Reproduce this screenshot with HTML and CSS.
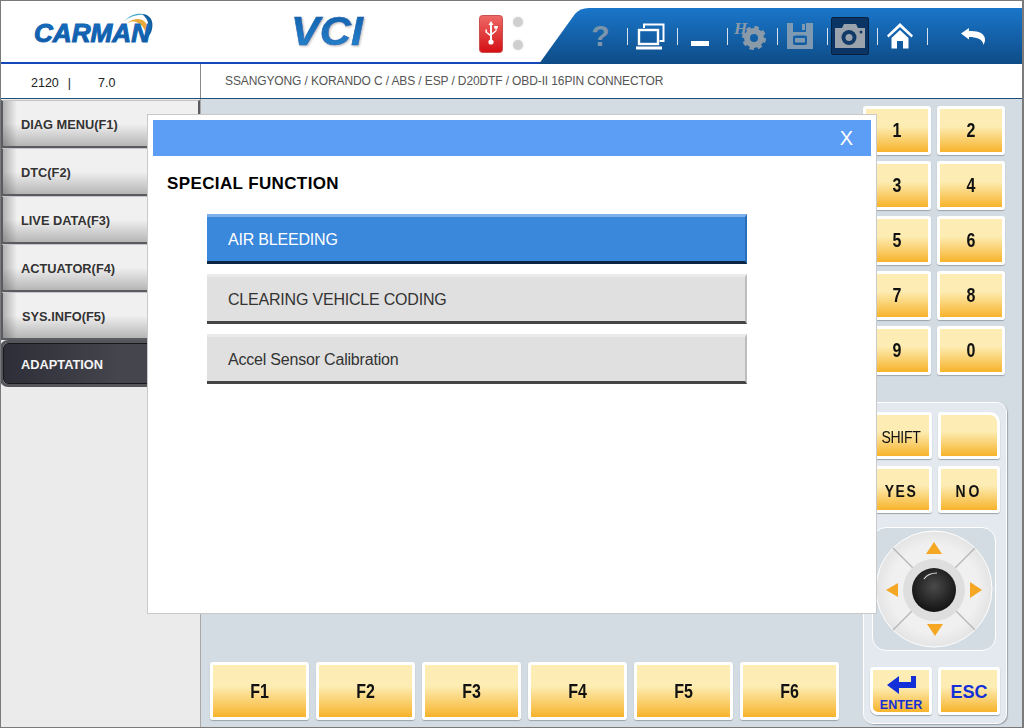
FILE: index.html
```html
<!DOCTYPE html>
<html lang="en">
<head>
<meta charset="utf-8">
<title>CARMAN VCI</title>
<link rel="stylesheet" href="styles.css">
</head>
<body>
<div class="app">
  <header class="top">
    <div class="logo-cell">
      <svg class="carman" width="130" height="34" viewBox="0 0 130 34">
        <defs>
          <linearGradient id="cg" x1="0" y1="0" x2="0" y2="1"><stop offset="0" stop-color="#1a72c4"/><stop offset="1" stop-color="#0d559f"/></linearGradient>
        </defs>
        <g transform="translate(-2 0)">
          <path d="M92 8 C99 1 108 -1 113 2 C106 1 99 3 92 8Z" fill="#3fa9c8"/>
          <path d="M95 10 C102 5 109 5 113 9 C116 13 116 18 114 22 C113 16 110 11 104 9 C101 8 98 9 95 10Z" fill="#e9a93a"/>
          <path d="M110 1 C118 1 122 8 120 16 C119 22 114 27 109 29 L113 22 C118 16 118 7 110 1Z" fill="#11609f"/>
        </g>
        <text x="0" y="29" class="carman-text" textLength="116" lengthAdjust="spacingAndGlyphs" fill="url(#cg)" stroke="#1264b2" stroke-width="1">CARMAN</text>
      </svg>
    </div>
    <div class="vci-cell">
      <svg width="84" height="40" viewBox="0 0 84 40">
        <defs>
          <linearGradient id="vg" x1="0" y1="0" x2="0" y2="1"><stop offset="0" stop-color="#0f5da8"/><stop offset="1" stop-color="#2a86d0"/></linearGradient>
          <filter id="vs" x="-10%" y="-10%" width="125%" height="125%"><feDropShadow dx="1" dy="1" stdDeviation="0.8" flood-color="#999" flood-opacity=".7"/></filter>
        </defs>
        <text x="0" y="31" class="vci-text" textLength="72" lengthAdjust="spacingAndGlyphs" fill="url(#vg)" stroke="#1668b5" stroke-width=".6" filter="url(#vs)">VCI</text>
      </svg>
    </div>
    <div class="usb-cell">
      <svg width="24" height="38" viewBox="0 0 24 38">
        <defs><linearGradient id="ug" x1="0" y1="0" x2="0" y2="1"><stop offset="0" stop-color="#ee6a66"/><stop offset="1" stop-color="#d40f14"/></linearGradient></defs>
        <rect x=".5" y=".5" width="23" height="37" rx="3" fill="url(#ug)" stroke="#c9504e"/>
        <path d="M12 6 L14.5 10 H13 V25 H11 V10 H9.5Z M11 21 L6.5 17.5 V14.5 H8 V17 L11 19Z M13 18 L16.5 15.5 V13.5 H15.2 V11 H18.8 V13.5 H17.6 V16 L13 20Z" fill="#fff"/>
        <circle cx="12" cy="27" r="2.6" fill="#fff"/>
      </svg>
    </div>
    <div class="leds"><span class="led"></span><span class="led"></span></div>
    <nav class="toolbar">
      <div class="tool"><span class="help">?</span></div><i class="sep"></i>
      <div class="tool">
        <svg width="29" height="27" viewBox="0 0 29 27" fill="none" stroke="#fff" stroke-width="2"><path d="M8 5 V1.500 H27.500 V18 H23.500"/><rect x="3" y="7" width="19" height="14" stroke-width="2.400"/><path d="M0 25 H26" stroke-width="3.200"/></svg>
      </div><i class="sep"></i>
      <div class="tool"><span class="minimize"></span></div><i class="sep"></i>
      <div class="tool">
        <svg class="gear" width="34" height="28" viewBox="0 0 34 28">
          <circle cx="21" cy="16" r="7" fill="none" stroke="#8a9aa8" stroke-width="6"/>
          <circle cx="21" cy="16" r="10.500" fill="none" stroke="#8a9aa8" stroke-width="3" stroke-dasharray="4.4 3.850"/>
          <text x="1" y="12" class="h-mark">H</text>
        </svg>
      </div><i class="sep"></i>
      <div class="tool">
        <svg width="26" height="26" viewBox="0 0 26 26"><path fill-rule="evenodd" fill="#7e99b2" d="M0 0 H6 V9 H19 V0 H21 L26 0 V26 H0Z M6 14 Q6 12.500 8 12.500 H18 Q20 12.500 20 14 V20 Q20 22 18 22 H8 Q6 22 6 20Z M8 15 V19.500 H18 V15Z"/><path fill="#7e99b2" d="M15 1 H18 V7 H15Z"/></svg>
      </div><i class="sep"></i>
      <div class="tool tool-active">
        <svg width="32" height="26" viewBox="0 0 32 26">
          <path fill="#9aa3ab" d="M1 5 H8 L10 1 H22 L24 5 H31 V25 H1Z"/>
          <circle cx="15" cy="14.500" r="7.500" fill="#123a68"/>
          <circle cx="15" cy="14.500" r="3.500" fill="#9aa3ab"/>
          <circle cx="27" cy="9" r="1.500" fill="#123a68"/>
        </svg>
      </div><i class="sep"></i>
      <div class="tool">
        <svg width="26" height="26" viewBox="0 0 26 26"><path fill="#fff" d="M13 0 L26 12.500 L24.500 14.500 L13 4 L1.500 14.500 L0 12.500Z M4.500 15 L13 7 L21.500 15 V25.500 H16 V18 H10 V25.500 H4.500Z"/></svg>
      </div><i class="sep"></i>
      <div class="tool tool-back">
        <svg width="25" height="17" viewBox="0 0 25 17"><path fill="#fff" d="M0 5.500 L8 0 V3 C17 2.500 25 5 24 13 L22.500 17 C22 11 15 9 8 9 V11.500Z"/></svg>
      </div>
    </nav>
  </header>

  <div class="info">
    <div class="info-ver"><span class="ver-a">2120&nbsp; |</span><span>7.0</span></div>
    <div class="info-path">SSANGYONG / KORANDO C / ABS / ESP / D20DTF / OBD-II 16PIN CONNECTOR</div>
  </div>

  <main class="main">
    <aside class="sidebar">
      <div class="side-btn">DIAG MENU(F1)</div>
      <div class="side-btn">DTC(F2)</div>
      <div class="side-btn">LIVE DATA(F3)</div>
      <div class="side-btn">ACTUATOR(F4)</div>
      <div class="side-btn side-indent">SYS.INFO(F5)</div>
      <div class="side-btn side-active">ADAPTATION</div>
    </aside>
    <section class="center">
      <div class="fkeys">
        <div class="key fkey"><span class="tall">F1</span></div>
        <div class="key fkey"><span class="tall">F2</span></div>
        <div class="key fkey"><span class="tall">F3</span></div>
        <div class="key fkey"><span class="tall">F4</span></div>
        <div class="key fkey"><span class="tall">F5</span></div>
        <div class="key fkey"><span class="tall">F6</span></div>
      </div>
    </section>
    <section class="right">
      <div class="numpad">
        <div class="key"><span class="tall">1</span></div><div class="key"><span class="tall">2</span></div>
        <div class="key"><span class="tall">3</span></div><div class="key"><span class="tall">4</span></div>
        <div class="key"><span class="tall">5</span></div><div class="key"><span class="tall">6</span></div>
        <div class="key"><span class="tall">7</span></div><div class="key"><span class="tall">8</span></div>
        <div class="key"><span class="tall">9</span></div><div class="key"><span class="tall">0</span></div>
      </div>
      <div class="panel">
        <div class="panel-keys">
          <div class="key key-shift"><span class="tall">SHIFT</span></div><div class="key key-blank"></div>
          <div class="key key-yes"><span class="tall">YES</span></div><div class="key key-yes key-no"><span class="tall">NO</span></div>
        </div>
        <div class="joy">
          <svg width="124" height="124" viewBox="0 0 124 124">
            <defs>
              <radialGradient id="knob" cx=".5" cy=".42" r=".6"><stop offset="0" stop-color="#4a4a4a"/><stop offset=".7" stop-color="#222"/><stop offset="1" stop-color="#111"/></radialGradient>
              <radialGradient id="disc" cx=".5" cy=".5" r=".5"><stop offset=".75" stop-color="#f0f0f0"/><stop offset="1" stop-color="#e4e4e4"/></radialGradient>
            </defs>
            <circle cx="62" cy="62" r="58" fill="url(#disc)" stroke="#fff" stroke-width="1"/>
            <path d="M21 21 L103 103 M103 21 L21 103" stroke="#b5b5b5" stroke-width="1.200"/>
            <circle cx="62" cy="63" r="31" fill="#dedede"/>
            <circle cx="62" cy="63" r="22" fill="url(#knob)"/>
            <path d="M52 52 Q56 46 65 46" stroke="#ddd" stroke-width="1.200" fill="none"/>
            <path d="M62 15 L70 27 H54Z M14 63 L26 56 V70Z M110 63 L98 55 V71Z M63 109 L55 97 H71Z" fill="#f5a623"/>
          </svg>
        </div>
        <div class="panel-keys panel-keys-last">
          <div class="key key-enter">
            <svg width="29" height="18" viewBox="0 0 29 18"><path fill="#1330d8" d="M0 9 L12 0 V6 H24 V0 H29 V12 H12 V18Z"/></svg>
            <span class="enter-label">ENTER</span>
          </div>
          <div class="key key-esc">ESC</div>
        </div>
      </div>
    </section>
  </main>

  <div class="modal">
    <div class="modal-bar"><span class="modal-close">X</span></div>
    <h1 class="modal-title">SPECIAL FUNCTION</h1>
    <div class="options">
      <div class="opt opt-active">AIR BLEEDING</div>
      <div class="opt">CLEARING VEHICLE CODING</div>
      <div class="opt">Accel Sensor Calibration</div>
    </div>
  </div>
</div>
</body>
</html>
```
FILE: styles.css
```css
* { box-sizing: border-box; }
html, body { margin: 0; padding: 0; }
body { font-family: "Liberation Sans", Arial, sans-serif; background: #fff; }

.app {
  position: relative;
  width: 1024px;
  height: 728px;
  display: flex;
  flex-direction: column;
  border: 1px solid #7a7a7a;
  border-right-width: 2px;
  background: #fff;
  overflow: hidden;
}

/* header */
.top {
  height: 63px;
  flex: none;
  display: flex;
  align-items: flex-start;
  border-bottom: 2px solid #1547b8;
  background: #fff;
}
.logo-cell { width: 291px; padding: 12px 0 0 33px; }
.carman { display: block; overflow: visible; }
.carman-text { font: italic 700 25px "Liberation Sans", sans-serif; }
.vci-cell { width: 188px; padding-top: 13px; }
.vci-cell svg { display: block; overflow: visible; }
.vci-text { font: italic 700 40px "Liberation Sans", sans-serif; }
.usb-cell { width: 34px; padding-top: 14px; }
.usb-cell svg { display: block; }
.leds {
  width: 26px;
  padding-top: 16px;
  display: flex;
  flex-direction: column;
  gap: 13px;
}
.led {
  width: 10px;
  height: 10px;
  border-radius: 50%;
  background: #cfcfcf;
  box-shadow: 0 0 3px #e2e2e2;
}
.toolbar {
  margin-top: 7px;
  width: 486px;
  height: 56px;
  margin-left: auto;
  margin-right: -2px;
  padding-left: 39px;
  display: flex;
  align-items: center;
  background: linear-gradient(#1a76ca, #0e4c87);
  clip-path: path("M0 56 L36 6 Q41 0 50 0 H486 V56 Z");
}
.tool {
  width: 49px;
  height: 38px;
  padding-right: 4px;
  display: flex;
  align-items: center;
  justify-content: center;
  flex: none;
}
.tool-active {
  background: #0a3463;
  border: 1px solid #06213f;
  border-radius: 2px;
  width: 38px;
  padding: 0;
  margin: 0 8px 0 3px;
}
.tool-back { width: 92px; padding: 0; }
.gear { overflow: visible; }
.sep {
  width: 1px;
  height: 17px;
  background: #d8e2ec;
  flex: none;
}
.help { font-size: 30px; font-weight: 700; color: #7d95ab; line-height: 1; }
.minimize { width: 18px; height: 5px; background: #fff; margin-top: 14px; }
.h-mark { font: italic 700 17px "Liberation Serif", serif; fill: #8a9aa8; }

/* info bar */
.info {
  height: 35px;
  flex: none;
  display: flex;
  border-bottom: 1px solid #1f4f7a;
  color: #222;
}
.info-ver {
  width: 200px;
  border-right: 1px solid #8a8a8a;
  padding: 12px 0 0 30px;
  font-size: 12.500px;
  display: flex;
}
.ver-a { width: 67px; word-spacing: 1px; }
.info-path { padding: 10px 0 0 24px; font-size: 12px; letter-spacing: -.12px; color: #555; }

/* main */
.main { flex: 1; display: flex; min-height: 0; }
.sidebar {
  width: 200px;
  flex: none;
  padding-top: 1px;
  background: #ebebeb;
  border-right: 1px solid #a8a8a8;
}
.side-btn {
  height: 48px;
  padding: 16px 0 0 18px;
  font-size: 12.800px;
  font-weight: 700;
  line-height: 15px;
  color: #333;
  background:
    linear-gradient(90deg, rgba(60, 60, 60, .35), rgba(60, 60, 60, 0) 14px),
    linear-gradient(#f1f0f0 50%, #b6b6b6);
  border: 2px solid #5a5b60;
  border-width: 1px 2px 2px 2px;
  border-top-color: #c4c4c4;
}
.side-indent { padding-left: 19px; }
.side-active {
  height: 41px;
  margin: 3px 3px 4px 2px;
  padding: 13px 0 0 17px;
  background: linear-gradient(90deg, #2e2e38, #45454e 60%);
  color: #f4f4f4;
  border: 1px solid #17171c;
  border-radius: 5px;
  box-shadow: 0 0 0 3px #55565c;
}
.center {
  flex: 1;
  display: flex;
  flex-direction: column;
  justify-content: flex-end;
  background: #d3dce3;
  padding: 0 0 7px 9px;
  min-width: 0;
}
.fkeys { display: flex; gap: 7px; }
.right {
  width: 160px;
  flex: none;
  background: #d3dce3;
  padding: 7px 0 0 1px;
}
.numpad {
  display: grid;
  grid-template-columns: 68px 68px;
  grid-auto-rows: 49px;
  gap: 6px;
}

/* keys */
.key {
  display: flex;
  align-items: center;
  justify-content: center;
  font-size: 16px;
  font-weight: 700;
  color: #111;
  background: linear-gradient(#fdedb4 40%, #f7b32b);
  border: 3px solid #fff;
  border-radius: 3px;
  box-shadow: 0 1px 1px #9aa3aa;
}
.tall { display: inline-block; transform: scaleY(1.220); }
.fkey { width: 99px; height: 58px; padding-top: 1px; }

/* lower panel */
.panel {
  margin-top: 27px;
  width: 144px;
  height: 322px;
  background: #e3e9ee;
  border: 1px solid #fff;
  border-radius: 10px;
  box-shadow: 1px 1px 1px #9ba3aa;
  padding: 9px 0 0 6px;
}
.panel-keys {
  display: grid;
  grid-template-columns: 62px 62px;
  grid-auto-rows: 47px;
  column-gap: 6px;
  row-gap: 7px;
}
.key-blank { border-top-right-radius: 10px; }
.key-shift { font-size: 14px; font-weight: 400; letter-spacing: -.3px; padding-top: 2px; }
.key-yes { font-size: 14px; letter-spacing: 1.500px; padding-top: 2px; }
.key-no { letter-spacing: 3px; }
.joy {
  margin: 14px 0 0 2px;
  width: 124px;
  height: 124px;
  background: #d3dce3;
  border: 1px solid #fff;
  border-radius: 14px;
}
.joy svg { display: block; margin: -1px 0 0 -1px; }
.panel-keys-last { margin-top: 16px; grid-auto-rows: 48px; }
.key-enter { flex-direction: column; border-bottom-left-radius: 8px; padding-top: 4px; }
.enter-label { font-size: 12.500px; line-height: 12px; color: #1330d8; margin-top: 5px; }
.key-esc { font-size: 18px; color: #1330d8; padding-top: 2px; }

/* modal */
.modal {
  position: absolute;
  left: 146px;
  top: 113px;
  width: 730px;
  height: 500px;
  background: #fff;
  border: 1px solid #c9c9c9;
  padding: 5px;
}
.modal-bar {
  height: 36px;
  width: 718px;
  background: #5c9df5;
  display: flex;
  align-items: center;
  justify-content: flex-end;
  padding-right: 18px;
}
.modal-close { color: #fff; font-size: 20px; }
.modal-title {
  margin: 19px 0 0 14px;
  font-size: 17px;
  letter-spacing: .38px;
  line-height: 18px;
  font-weight: 700;
  color: #000;
}
.options {
  margin: 21px 0 0 54px;
  width: 540px;
  display: flex;
  flex-direction: column;
  gap: 10px;
}
.opt {
  height: 50px;
  padding: 13px 0 0 21px;
  font-size: 16px;
  letter-spacing: -.2px;
  line-height: 20px;
  color: #333;
  background: #e0e0e0;
  border-top: 3px solid #eaeaea;
  border-bottom: 3px solid #444;
  border-right: 2px solid #bdbdbd;
}
.opt-active {
  color: #fff;
  background: #3a88dc;
  border-top-color: #7db0ea;
  border-bottom-color: #0b2545;
  border-right-color: #2a6db8;
}
```
